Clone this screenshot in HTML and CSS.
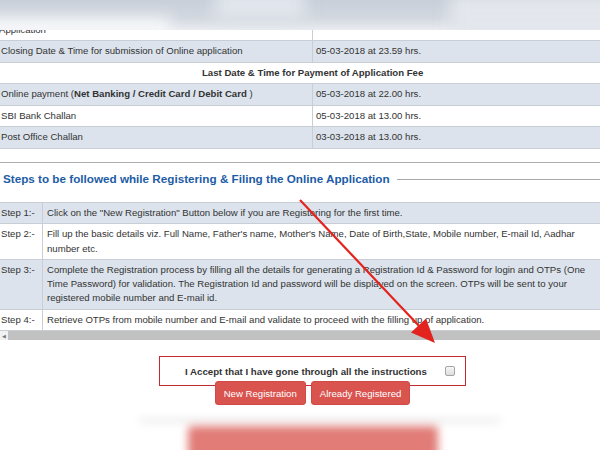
FILE: index.html
```html
<!DOCTYPE html>
<html lang="en">
<head>
    <meta charset="UTF-8">
    <meta name="viewport" content="width=device-width, initial-scale=1.0">
    <title>Online Application</title>
    <link rel="stylesheet" href="styles.css">
</head>
<body>
    <div class="scroller">
        <table class="dates">
            <tr class="cut">
                <td class="label">Application</td>
                <td></td>
            </tr>
            <tr class="alt">
                <td class="label">Closing Date &amp; Time for submission of Online application</td>
                <td>05-03-2018 at 23.59 hrs.</td>
            </tr>
            <tr>
                <td colspan="2" class="head">Last Date &amp; Time for Payment of Application Fee</td>
            </tr>
            <tr class="alt">
                <td class="label">Online payment (<b>Net Banking / Credit Card / Debit Card</b> )</td>
                <td>05-03-2018 at 22.00 hrs.</td>
            </tr>
            <tr>
                <td class="label">SBI Bank Challan</td>
                <td>05-03-2018 at 13.00 hrs.</td>
            </tr>
            <tr class="alt">
                <td class="label">Post Office Challan</td>
                <td>03-03-2018 at 13.00 hrs.</td>
            </tr>
        </table>

        <hr class="sep">

        <div class="legend">
            <h2>Steps to be followed while Registering &amp; Filing the Online Application</h2>
            <span class="rule"></span>
        </div>

        <table class="steps">
            <tr class="alt">
                <td class="step">Step 1:-</td>
                <td>Click on the "New Registration" Button below if you are Registering for the first time.</td>
            </tr>
            <tr>
                <td class="step">Step 2:-</td>
                <td>Fill up the basic details viz. Full Name, Father's name, Mother's Name, Date of Birth,State, Mobile number, E-mail Id, Aadhar<br>number etc.</td>
            </tr>
            <tr class="alt">
                <td class="step">Step 3:-</td>
                <td>Complete the Registration process by filling all the details for generating a Registration Id &amp; Password for login and OTPs (One<br>Time Password) for validation. The Registration Id and password will be displayed on the screen. OTPs will be sent to your<br>registered mobile number and E-mail id.</td>
            </tr>
            <tr>
                <td class="step">Step 4:-</td>
                <td>Retrieve OTPs from mobile number and E-mail and validate to proceed with the filling up of application.</td>
            </tr>
        </table>
    </div>

    <div class="scrollbar">
        <span class="left">&#9664;</span>
        <span class="thumb"></span>
    </div>

    <div class="actions">
        <label class="accept">
            <span>I Accept that I have gone through all the instructions</span>
            <input type="checkbox" id="acceptBox">
        </label>
        <div class="buttons">
            <button id="newButton">New Registration</button>
            <button id="oldButton">Already Registered</button>
        </div>
    </div>

    <!-- blurred edges of the photo -->
    <div class="blur-top">
        <span class="blob b1"></span>
        <span class="blob b2"></span>
        <span class="blob b3"></span>
    </div>
    <div class="blur-bottom">
        <span class="shade"></span>
        <span class="redbar"></span>
    </div>

    <svg class="pointer" width="600" height="450" viewBox="0 0 600 450">
        <line x1="300" y1="200" x2="420" y2="327" stroke="#e3241e" stroke-width="2.2"/>
        <polygon points="435,343 426,318.5 411,332.5" fill="#e3241e"/>
    </svg>
</body>
</html>
```

FILE: styles.css
```css
body {
    font-family: "Liberation Sans", Arial, sans-serif;
    font-size: 9.6px;
    color: #333;
    background-color: #fff;
    margin: 0;
    padding: 0;
    width: 600px;
    height: 450px;
    overflow: hidden;
    position: relative;
}
.scroller {
    width: 600px;
    overflow: hidden;
}
table {
    border-collapse: collapse;
    width: 680px;
    white-space: nowrap;
}
td {
    padding: 3px 2px 3px 3px;
    line-height: 14.5px;
    border-bottom: 1px solid #c9ced5;
    vertical-align: top;
    text-align: left;
}
tr.alt td {
    background-color: #dce3ec;
}
.dates {
    margin-top: 19.5px;
}
.dates td.label {
    width: 309px;
    border-right: 1px solid #c9ced5;
    padding-left: 1px;
}
.dates tr.cut td.label {
    text-indent: -2px;
}
.dates td.head {
    font-weight: bold;
    text-align: left;
    padding-left: 202px;
}
.sep {
    margin: 13px 0 0;
    border: 0;
    border-top: 1px solid #adadad;
    height: 0;
}
.legend {
    display: flex;
    align-items: center;
    margin-top: 8px;
    height: 16px;
}
.legend h2 {
    font-size: 11.7px;
    font-weight: bold;
    color: #1d5ca6;
    margin: 0 0 0 3px;
    white-space: nowrap;
}
.legend .rule {
    flex: 1;
    border-top: 1px solid #a9a9a9;
    margin-left: 7px;
    margin-top: 1px;
}
.steps {
    margin-top: 15.5px;
    border-top: 1px solid #c9ced5;
}
.steps td {
    line-height: 14.3px;
    padding: 3px 4px;
}
.steps td.step {
    width: 37px;
    padding-left: 1px;
    border-right: 1px solid #c9ced5;
}
.scrollbar {
    height: 9px;
    display: flex;
    align-items: center;
    background-color: #f1f1f1;
}
.scrollbar .left {
    width: 8px;
    font-size: 5px;
    color: #777;
    text-align: center;
}
.scrollbar .thumb {
    flex: 1;
    height: 9px;
    background-color: #c1c1c1;
}
.actions {
    padding-left: 25px;
    display: flex;
    flex-direction: column;
    align-items: center;
}
.accept {
    margin-top: 16px;
    width: 307px;
    height: 30px;
    box-sizing: border-box;
    border: 1px solid #c62a2f;
    display: flex;
    align-items: center;
    padding: 0 10px 0 25px;
    font-weight: bold;
    font-size: 9.7px;
    color: #333;
}
.accept span {
    flex: 1;
}
.accept input {
    appearance: none;
    width: 10px;
    height: 10px;
    margin: 0;
    border: 1px solid #a5a5a5;
    border-radius: 2px;
    background: linear-gradient(#f6f6f6, #dedede);
    box-sizing: border-box;
}
.buttons {
    display: flex;
    gap: 5px;
    margin-top: -5px;
}
.buttons button {
    font-family: "Liberation Sans", Arial, sans-serif;
    font-size: 9.6px;
    background-color: #d9534f;
    color: #fff;
    border: 1px solid #d14a46;
    border-radius: 3px;
    height: 24px;
    padding: 0 8px;
    cursor: pointer;
}
.blur-top {
    position: absolute;
    top: 0;
    left: 0;
    width: 600px;
    height: 30px;
    overflow: hidden;
    background: linear-gradient(#c8cfd9, #d3d8e0 60%, #e9ecf0);
}
.blob {
    position: absolute;
    filter: blur(8px);
}
.b1 {
    left: -20px;
    top: 18px;
    width: 190px;
    height: 20px;
    background-color: #f7f8fa;
}
.b2 {
    left: 215px;
    top: -10px;
    width: 90px;
    height: 30px;
    background-color: #e1e6ed;
}
.b3 {
    left: 450px;
    top: -6px;
    width: 170px;
    height: 40px;
    background-color: #e3e7ed;
}
.blur-bottom {
    position: absolute;
    top: 412px;
    left: 0;
    width: 600px;
    height: 38px;
    overflow: hidden;
}
.shade {
    position: absolute;
    left: 140px;
    top: 6px;
    width: 360px;
    height: 5px;
    background-color: #ececec;
    filter: blur(4px);
}
.redbar {
    position: absolute;
    left: 188px;
    top: 14px;
    width: 250px;
    height: 40px;
    background-color: #e17c77;
    border-radius: 4px;
    filter: blur(4px);
}
.pointer {
    position: absolute;
    top: 0;
    left: 0;
    pointer-events: none;
}
```
